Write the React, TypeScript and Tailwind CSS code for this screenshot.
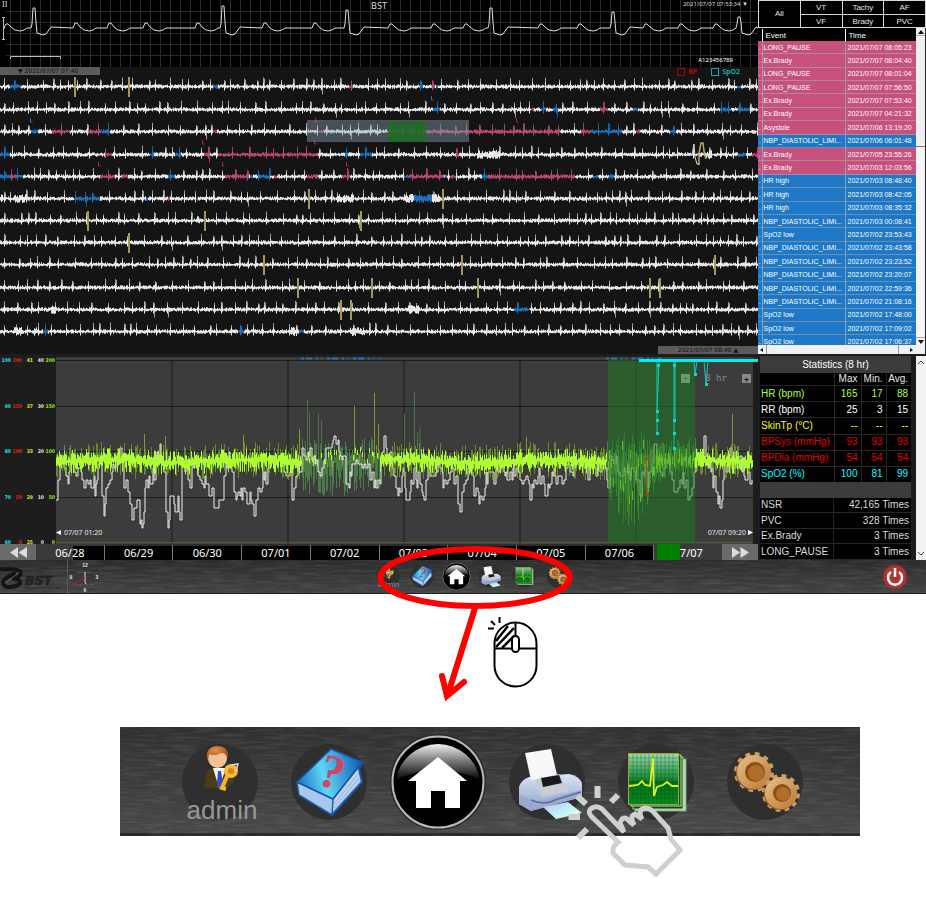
import React from "react";

const PINK = "#c2185b";
const BLUE = "#1e73be";

function makeRandom(seed: number) {
  let s = seed;
  return () => {
    s = (s * 1664525 + 1013904223) % 4294967296;
    return s / 4294967296;
  };
}

/* ---------- lead II strip ---------- */

const beats: [number, "p" | "q", number][] = [
  [7, "p", 24], [34, "q", 8], [76, "p", 23], [110, "p", 23], [146, "p", 23], [198, "p", 23],
  [223, "q", 6], [265, "p", 23], [315, "p", 23], [347, "q", 10], [391, "p", 24], [434, "p", 24],
  [466, "p", 24], [491, "q", 8], [541, "p", 24], [580, "p", 24], [613, "q", 12], [646, "p", 24],
  [681, "p", 24], [716, "p", 24], [739, "q", 17],
];

const leadPath =
  "M5 28 " +
  beats
    .map(([x, kind, top]) =>
      kind === "p"
        ? `L${x - 3} 28 L${x - 1} ${top} L${x + 1} ${top} L${x + 4} 27 L${x + 8} 30 L${x + 13} 31 L${x + 17} 30 L${x + 20} 28`
        : `L${x - 3} 28 L${x - 2} 24 L${x - 1} ${top} L${x + 1} ${top} L${x + 2} 22 L${x + 3} 33 L${x + 9} 35 L${x + 12} 34 L${x + 17} 27`
    )
    .join(" ") +
  " L758 28";

function LeadStrip() {
  return (
    <section className="relative h-[67px] bg-black">
      <svg className="block h-full w-full" viewBox="0 0 758 67" preserveAspectRatio="none">
        {Array.from({ length: 75 }, (_, i) => (
          <path key={i} d={`M${i * 10 + 10.5} 0V67`} stroke="#2b2b2b" />
        ))}
        {[11.5, 22.5, 33.5, 44.5, 55.5].map((y) => (
          <path key={y} d={`M6 ${y}H758`} stroke="#2b2b2b" />
        ))}
        <path d={leadPath} fill="none" stroke="#dedede" strokeLinejoin="round" />
        <path d="M3.5 17V40M2 17.5H5M2 39.5H5M10.5 59V56.5H60.5V59" fill="none" stroke="#bdbdbd" />
      </svg>
      <div className="absolute inset-x-0 top-0 grid grid-cols-3 px-[2px] text-[#dcdcdc]">
        <span className="font-['Liberation_Serif',serif] text-[8px] leading-[9px]">II</span>
        <span className="text-center font-['Noto_Sans',sans-serif] text-[9px] leading-[12px]">BST</span>
        <span className="pr-[8px] text-right font-['Noto_Sans',sans-serif] text-[6px] leading-[9px]">
          2021/07/07 07:53:34 ▼
        </span>
      </div>
      <span className="absolute right-[25px] bottom-[3px] font-['Noto_Sans',sans-serif] text-[6px] leading-[8px] text-white">
        A123456789
      </span>
    </section>
  );
}

/* ---------- twelve-row overview ---------- */

type Row = { y: number; blue?: number[][]; pink?: number[][]; pauses?: number[]; busy?: number[][] };

const rows: Row[] = [
  { y: 86, blue: [[10, 21], [213, 218], [420, 423], [436, 438], [737, 741]], pink: [[349, 353], [432, 435]], pauses: [74, 128] },
  { y: 109, blue: [[433, 440], [541, 546], [553, 558], [633, 638], [720, 731], [738, 750]], pink: [[531, 534], [600, 608]] },
  { y: 131, blue: [[31, 38], [100, 110], [591, 622], [670, 676]], pink: [[52, 70], [88, 100], [213, 217], [318, 324], [388, 560], [581, 591], [636, 640]] },
  { y: 154, blue: [[0, 10], [150, 154], [175, 181], [345, 348], [360, 372], [738, 746]], pink: [[105, 112], [204, 210], [218, 318], [456, 459], [752, 758]], busy: [[477, 500], [706, 712]] },
  { y: 176, blue: [[0, 10], [17, 23], [168, 175], [250, 253], [258, 270], [404, 408], [445, 447], [482, 488], [593, 598], [609, 614]], pink: [[10, 17], [100, 115], [122, 128], [225, 249], [274, 277], [307, 318], [342, 350], [408, 444], [450, 456], [488, 575]] },
  { y: 198, blue: [[74, 100], [146, 148], [414, 432]], pink: [[168, 170], [196, 198]], pauses: [308, 442], busy: [[0, 3], [14, 26], [338, 354], [404, 440]] },
  { y: 220, pauses: [87, 204, 360], busy: [[196, 200]] },
  { y: 242, pauses: [128] },
  { y: 264, pauses: [263, 461, 714] },
  { y: 287, pauses: [297, 371, 477, 649, 659] },
  { y: 309, blue: [[514, 530]], pauses: [340, 350], busy: [[51, 55], [408, 420]] },
  { y: 331, blue: [[43, 48], [238, 244], [299, 304]], busy: [[14, 22], [34, 37], [290, 298], [350, 365]] },
];

const inside = (list: number[][] | undefined, x: number) => !!list && list.some(([a, b]) => x >= a && x < b);

function traceRow(row: Row, index: number) {
  const rnd = makeRandom(index * 977 + 31);
  const out: Record<string, string> = { white: "", blue: "", pink: "", sWhite: "", sBlue: "", sPink: "" };
  let next = 4;
  for (let x = 0; x < 758; x++) {
    const key = inside(row.blue, x) ? "blue" : inside(row.pink, x) ? "pink" : "white";
    const k = inside(row.busy, x) ? 2 : 1;
    const c = row.y - 67 + 0.5;
    const up = (0.5 + rnd() * 1.8) * k;
    const down = (0.7 + rnd() * 1.6) * k;
    out[key] += `M${x + 0.5} ${(c - up).toFixed(1)}V${(c + down).toFixed(1)}`;
    if (x >= next) {
      const s = key === "blue" ? "sBlue" : key === "pink" ? "sPink" : "sWhite";
      const h = 6 + rnd() * 3;
      out[s] += `M${x + 0.5} ${(c - h).toFixed(1)}V${(c + 2).toFixed(1)}`;
      if (rnd() < 0.4) out[s] += `M${x + 1.5} ${(c - h + 1).toFixed(1)}V${(c + 2).toFixed(1)}`;
      out[key] += `M${x + 0.5} ${(c - 4).toFixed(1)}V${(c + 4).toFixed(1)}`;
      if (rnd() < 0.03) out[s] += `M${x + 1.5} ${c}V${c + 8}`;
      next = x + 6 + Math.floor(rnd() * 12);
    }
  }
  return out;
}

const traces = rows.map(traceRow);
const lMarks: [number, number, string][] = [
  [432, 98, BLUE], [31, 120, BLUE], [316, 120, PINK], [517, 120, PINK], [203, 142, PINK],
  [315, 142, PINK], [99, 164, PINK], [223, 164, PINK], [347, 164, PINK],
];

function Overview() {
  return (
    <section className="relative flex h-[287px] flex-col justify-between bg-[#141414] font-['DejaVu_Sans',sans-serif] text-[6px]">
      <svg className="absolute inset-0 h-full w-full" viewBox="0 0 758 287" preserveAspectRatio="none">
        {traces.map((t, i) => (
          <g key={i} fill="none">
            <path d={t.sWhite} stroke="#a0a0a0" />
            <path d={t.sBlue} stroke="#1a5f9c" />
            <path d={t.sPink} stroke="#9c4063" />
            <path d={t.white} stroke="#e8e8e8" />
            <path d={t.blue} stroke={BLUE} />
            <path d={t.pink} stroke="#b84a70" />
            {(rows[i].pauses || []).map((x) => (
              <path key={x} d={`M${x + 1} ${rows[i].y - 76}v20`} stroke="#a59a55" strokeWidth="2" />
            ))}
          </g>
        ))}
        <path d="M692 88L694 77L695 90L697 97H700" fill="none" stroke="#dedede" />
        <path d="M697 97H699V86L701 76H703L704 84L706 92" fill="none" stroke="#b5aa62" strokeWidth="1.5" />
        {lMarks.map(([x, y, color], i) => (
          <path key={i} d={`M${x - 0.5} ${y - 69}v4h2`} fill="none" stroke={color} />
        ))}
        <rect x="307.5" y="53.5" width="161" height="21" fill="#8ba5b8" fillOpacity="0.42" stroke="#6d5a70" strokeOpacity="0.7" />
        <rect x="388" y="54" width="38" height="21" fill="#1f6b25" fillOpacity="0.85" />
      </svg>
      <div className="relative flex items-start justify-between">
        <div className="h-[8px] w-[100px] bg-[#5b5b5b] pl-[18px] leading-[8px] text-[#101010]">▼ 2021/07/07 07:40</div>
        <div className="flex gap-[14px] pt-[1px] pr-[18px] font-['Noto_Sans',sans-serif] text-[7px] leading-[8px] font-bold">
          <label className="flex items-center gap-[3px] text-[#c00000]">
            <input type="checkbox" className="h-[8px] w-[8px] appearance-none border border-[#b00000]" />
            BP
          </label>
          <label className="flex items-center gap-[3px] text-[#16a8a8]">
            <input type="checkbox" className="h-[8px] w-[8px] appearance-none border border-[#16a8a8]" />
            SpO2
          </label>
        </div>
      </div>
      <div className="relative h-[8px] w-[100px] self-end bg-[#5b5b5b] text-center leading-[8px] text-[#101010]">
        2021/07/07 08:40 ▲
      </div>
    </section>
  );
}

/* ---------- trend chart ---------- */

const respiration: [number, number][] = [
  [56, 492], [60, 455], [65, 470], [72, 475], [78, 462], [83, 494], [88, 475], [95, 482], [100, 455], [103, 512],
  [108, 480], [115, 465], [121, 442], [123, 475], [128, 488], [132, 508], [137, 500], [142, 526], [145, 495], [148, 480],
  [155, 470], [160, 442], [163, 465], [167, 522], [172, 490], [175, 512], [178, 485], [180, 518], [183, 450], [190, 488],
  [195, 455], [200, 478], [207, 480], [210, 500], [213, 496], [216, 517], [222, 488], [228, 460], [233, 475], [235, 505],
  [240, 488], [245, 500], [250, 500], [256, 508], [260, 480], [268, 470], [273, 452], [280, 458], [290, 475], [293, 498],
  [300, 460], [307, 446], [314, 455], [322, 470], [330, 440], [336, 431], [342, 455], [348, 485], [355, 460], [366, 470],
  [378, 485], [384, 445], [390, 460], [395, 485], [399, 498], [403, 465], [407, 514], [413, 465], [418, 480], [423, 503],
  [428, 470], [435, 488], [440, 465], [447, 490], [452, 470], [460, 500], [468, 470], [473, 485], [481, 505], [487, 475],
  [493, 482], [500, 455], [507, 470], [515, 478], [525, 478], [532, 495], [540, 475], [546, 493], [552, 470], [560, 480],
  [570, 470], [580, 460], [590, 470], [600, 465], [608, 478], [612, 450], [620, 482], [628, 470], [640, 483], [645, 460],
  [648, 488], [655, 442], [660, 478], [668, 465], [675, 500], [680, 470], [690, 500], [697, 465], [705, 442], [709, 468],
  [715, 480], [720, 508], [725, 460], [732, 455], [740, 465], [748, 475], [752, 490],
];

function buildTrend() {
  const rnd = makeRandom(4242);
  let white = "";
  let i = 0;
  for (let x = 56; x < 753; x += 1) {
    while (i < respiration.length - 2 && respiration[i + 1][0] <= x) i++;
    const [x0, y0] = respiration[i];
    const [x1, y1] = respiration[i + 1];
    const t = Math.min(1, (x - x0) / (x1 - x0));
    const y = Math.round((y0 + (y1 - y0) * t + (rnd() - 0.45) * 22) / 4) * 4;
    if (x === 56) white = `M56 ${y}`;
    else if (x % 2 === 0 || rnd() < 0.3) white += `H${x}V${y}`;
  }
  let bright = "";
  let mid = "";
  let dark = "";
  for (let x = 56; x < 753; x += 1) {
    const c = 461 + Math.sin(x / 23) * 1.5;
    const a = rnd() < 0.15 ? 11 : 1 + rnd() * 7;
    const b = rnd() < 0.15 ? 12 : 1 + rnd() * 8;
    const quiet = x > 301 && x < 380;
    const alarm = x >= 606 && x <= 655;
    if (quiet) {
      dark += `M${x + 0.5} ${(c - rnd() * 24).toFixed(0)}V${(c + rnd() * 34).toFixed(0)}`;
      if (rnd() < 0.3) mid += `M${x + 0.5} ${(c - rnd() * 16).toFixed(0)}v${(4 + rnd() * 10).toFixed(0)}`;
      if (rnd() < 0.3) bright += `M${x + 0.5} ${(c - rnd() * 14).toFixed(0)}v5`;
    } else if (alarm) {
      const low = 30 + 36 * Math.sin(((x - 606) / 49) * Math.PI);
      dark += `M${x + 0.5} ${(c - rnd() * 30).toFixed(0)}V${(c + rnd() * low).toFixed(0)}`;
      if (rnd() < 0.5) mid += `M${x + 0.5} ${(c - rnd() * 22).toFixed(0)}V${(c + rnd() * low).toFixed(0)}`;
      if (rnd() < 0.5) bright += `M${x + 0.5} ${(c + (rnd() - 0.4) * low).toFixed(0)}v9`;
    } else {
      const sparse = x > 655 && x < 696;
      if (!sparse || rnd() < 0.7) bright += `M${x + 0.5} ${(c - a).toFixed(1)}V${(c + b).toFixed(1)}`;
      if (rnd() < 0.45) mid += `M${x + 0.5} ${(c - 5 - rnd() * 13).toFixed(0)}V${(c + 6 + rnd() * 13).toFixed(0)}`;
      if (sparse) dark += `M${x + 0.5} ${(c - rnd() * 22).toFixed(0)}V${(c + rnd() * 24).toFixed(0)}`;
    }
  }
  return { white, bright, mid, dark };
}

const trend = buildTrend();
const axisRows = [
  ["100", "200", "41", "40", "200"],
  ["90", "150", "37", "30", "150"],
  ["80", "100", "33", "20", "100"],
  ["70", "50", "29", "10", "50"],
  ["60", "0", "25", "0", "0"],
];
const axisColors = ["text-[#1fe0e0]", "text-[#e62222]", "text-[#e6e622]", "text-[#e0e0e0]", "text-[#9be622]"];
const markers = [[658, 365], [657, 411], [657, 420], [657, 433], [674, 365], [674, 420], [674, 433], [674, 448], [695, 374], [706, 384]];

function TrendChart() {
  return (
    <section className="flex h-[190px] bg-[#1d1d1d]">
      <div className="flex w-[56px] flex-col justify-between pt-[4px] font-['DejaVu_Sans_Condensed','DejaVu_Sans',sans-serif] text-[5px] leading-[4px] font-bold">
        {axisRows.map((r) => (
          <div key={r[0]} className="grid grid-cols-5 pr-[1px] text-right">
            {r.map((v, i) => (
              <span key={i} className={axisColors[i]}>{v}</span>
            ))}
          </div>
        ))}
      </div>
      <div className="relative min-w-0 flex-1">
        <svg className="block h-full w-full" viewBox="56 354 702 190" preserveAspectRatio="none">
          <rect x="56" y="357" width="697" height="186" fill="#3c3c3c" />
          <path d="M56 360.5H753M56 406.5H753M56 451.5H753M56 497.5H753M172 360V543M288 360V543M404 360V543M520 360V543M636 360V543" stroke="#1c1c1c" />
          <path d="M56 543H753" stroke="#6c6c4c" />
          <path d="M301 358.5H380M606 358.5H662" stroke={BLUE} strokeWidth="2" strokeDasharray="3 2 6 4 2 3 1 5" />
          <path d={trend.dark} stroke="#4c7a48" />
          <path d="M307.5 400V460M309.5 412V450M318.5 413V450M321.5 420V455M404.5 414V450M414.5 392V450M417.5 432V455M420 427V455" stroke="#4a7448" />
          <path d={trend.white} fill="none" stroke="#f0f0f0" strokeWidth="1" />
          <path d={trend.mid} stroke="#86bd2f" strokeOpacity="0.6" />
          <path d={trend.bright} stroke="#adff2f" />
          <path d="M374.5 393V450M354.5 406V455M378.5 424V460M144.5 434V455M165.5 436V455M243.5 435V455M299.5 429V455M526.5 437V455M732.5 414V455" stroke="#7d9a35" />
          <rect x="608" y="360" width="87" height="183" fill="#1d7a22" fillOpacity="0.52" />
          <path d="M639 360.5H758" stroke="#00f0f0" strokeWidth="3" />
          <path d="M657 362V433M659 362L657 411M674 362V448M675 362V420M694 361L695 374L697 361M704 361L706 384L708 361" fill="none" stroke="#12c9b4" />
          {markers.map(([x, y]) => (
            <rect key={`${x}-${y}`} x={x - 1} y={y - 1} width="3" height="3" fill="#10d8c4" />
          ))}
          <path d="M646.5 459V495" stroke="#b5431c" />
          <circle cx="646.5" cy="459" r="1.5" fill="#d42a10" />
          <circle cx="646.5" cy="494.500" r="1.5" fill="#d42a10" />
        </svg>
        <div className="absolute top-[20px] right-[7px] flex w-[70px] items-center justify-between font-['DejaVu_Sans_Mono',monospace] text-[9px] leading-[9px] text-[#8c8c8c]">
          <button type="button" aria-label="Shorter range" className="h-[9px] w-[9px] bg-[#6a9a6a] text-[8px] leading-[8px] text-[#1f3f1f]">-</button>
          <span>8 hr</span>
          <button type="button" aria-label="Longer range" className="h-[9px] w-[9px] bg-[#8a8a8a] text-[9px] leading-[8px] text-black">+</button>
        </div>
        <div className="absolute right-[5px] bottom-[7px] left-0 flex justify-between font-['Noto_Sans',sans-serif] text-[7px] leading-[9px] text-[#e6e6e6]">
          <span className="flex items-center gap-[3px]">
            <svg className="h-[5px] w-[5px]" viewBox="0 0 5 5"><path d="M5 0V5L0 2.500z" fill="#fff" /></svg>
            07/07 01:20
          </span>
          <span className="flex items-center gap-[2px]">
            07/07 09:20
            <svg className="h-[5px] w-[5px]" viewBox="0 0 5 5"><path d="M0 0V5L5 2.500z" fill="#fff" /></svg>
          </span>
        </div>
      </div>
    </section>
  );
}

const days = ["06/28", "06/29", "06/30", "07/01", "07/02", "07/03", "07/04", "07/05", "07/06", "07/07"];

function Timeline() {
  return (
    <nav className="relative flex h-[16px] bg-black font-['Noto_Sans',sans-serif] text-[11px] leading-[14px] text-white">
      <button type="button" aria-label="Earlier" className="flex w-[36px] items-center justify-center bg-[#6a6a6a]">
        <svg className="h-[11px] w-[17px]" viewBox="0 0 17 11"><path d="M8 0V11L0 5.500zM17 0V11L8.500 5.500z" fill="#dcdcdc" /></svg>
      </button>
      {days.map((d, i) => (
        <button
          type="button"
          key={d}
          className={
            i === 0
              ? "flex-1 border-t-2 border-[#3a3a3a] bg-[linear-gradient(90deg,#3a3a3a_54%,#000_54%)]"
              : i === 9
                ? "relative flex-1 border-t-2 border-l border-[#3a3a3a] border-l-[#777] bg-[#3a3a3a]"
                : "flex-1 border-t-2 border-l border-t-[#2c2c2c] border-l-[#777]"
          }
        >
          {d}
          {i === 9 && <span className="absolute -top-[2px] left-[3px] h-[16px] w-[23px] bg-[#008000]" />}
        </button>
      ))}
      <button type="button" aria-label="Later" className="flex w-[36px] items-center justify-center bg-[#6a6a6a]">
        <svg className="h-[11px] w-[17px]" viewBox="0 0 17 11"><path d="M0 0V11L8 5.500zM8.500 0V11L17 5.500z" fill="#dcdcdc" /></svg>
      </button>
    </nav>
  );
}

/* ---------- sidebar ---------- */

const filters = ["VT", "Tachy", "AF", "VF", "Brady", "PVC"];
const NBP = "NBP_DIASTOLIC_LIMI...";
const events: [string, string][] = [
  ["LONG_PAUSE", "2021/07/07 08:05:23"], ["Ex.Brady", "2021/07/07 08:04:40"], ["LONG_PAUSE", "2021/07/07 08:01:04"],
  ["LONG_PAUSE", "2021/07/07 07:56:50"], ["Ex.Brady", "2021/07/07 07:53:40"], ["Ex.Brady", "2021/07/07 04:21:32"],
  ["Asystole", "2021/07/06 13:19:20"], [NBP, "2021/07/06 06:01:48"], ["Ex.Brady", "2021/07/05 23:55:26"],
  ["Ex.Brady", "2021/07/03 12:03:56"], ["HR high", "2021/07/03 08:48:40"], ["HR high", "2021/07/03 08:42:05"],
  ["HR high", "2021/07/03 08:35:32"], [NBP, "2021/07/03 00:08:41"], ["SpO2 low", "2021/07/02 23:53:43"],
  [NBP, "2021/07/02 23:43:58"], [NBP, "2021/07/02 23:23:52"], [NBP, "2021/07/02 23:20:07"],
  [NBP, "2021/07/02 22:59:36"], [NBP, "2021/07/02 21:08:16"], ["SpO2 low", "2021/07/02 17:48:00"],
  ["SpO2 low", "2021/07/02 17:09:02"], ["SpO2 low", "2021/07/02 17:06:37"],
];
const isAlarm = (name: string) => name === "LONG_PAUSE" || name === "Ex.Brady" || name === "Asystole";

const stats: [string, string, string, string, string][] = [
  ["HR (bpm)", "165", "17", "88", "text-[#adff2f]"],
  ["RR (bpm)", "25", "3", "15", "text-white"],
  ["SkinTp (°C)", "--", "--", "--", "text-[#ffff00]"],
  ["BPSys (mmHg)", "93", "93", "93", "text-[#e60000]"],
  ["BPDia (mmHg)", "54", "54", "54", "text-[#e60000]"],
  ["SpO2 (%)", "100", "81", "99", "text-[#00ffff]"],
];
const counts: [string, string][] = [
  ["NSR", "42,165 Times"], ["PVC", "328 Times"], ["Ex.Brady", "3 Times"], ["LONG_PAUSE", "3 Times"],
];

function Arrow({ d }: { d: string }) {
  return <svg className="h-[4px] w-[6px]" viewBox="0 0 6 4"><path d={d} fill="#111" /></svg>;
}

function EventList() {
  return (
    <div className="flex h-[326px] flex-col border-r border-[#222] bg-black">
      <div className="flex min-h-0 flex-1">
        <div className="min-w-0 flex-1 overflow-hidden pt-[1px]">
          <table className="h-[320px] w-full table-fixed border-collapse font-['Liberation_Sans',sans-serif] text-[7px] leading-[9px] whitespace-nowrap text-white">
            <colgroup>
              <col className="w-[4px]" />
              <col />
              <col className="w-[71px]" />
            </colgroup>
            <thead>
              <tr className="h-[12px] text-left text-[8px]">
                <th />
                <th className="border-l border-white p-0 pl-[3px] font-normal">Event</th>
                <th className="border-l border-white p-0 pl-[3px] font-normal">Time</th>
              </tr>
            </thead>
            <tbody>
              {events.map(([name, time]) => (
                <tr key={time} className={isAlarm(name) ? "border-b border-[#b08a9a] bg-[#c8507c]" : "border-b border-[#6c8fb0] bg-[#1e78c8]"}>
                  <td className="p-0 text-center">.</td>
                  <td className="border-l border-[#8fa0b0] p-0 pl-[1px]">{name}</td>
                  <td className="border-l border-[#8fa0b0] p-0 pl-[2px]">{time}</td>
                </tr>
              ))}
            </tbody>
          </table>
        </div>
        <div className="flex w-[9px] flex-col justify-between bg-[#f4f4f4]">
          <div className="flex h-[119px] flex-col border-b border-[#777] bg-[#f0f0f0]">
            <button type="button" aria-label="Scroll up" className="flex h-[8px] items-center justify-center border-b border-[#aaa]"><Arrow d="M3 0L6 4H0z" /></button>
          </div>
          <button type="button" aria-label="Scroll down" className="flex h-[8px] items-center justify-center border-t border-[#aaa]"><Arrow d="M0 0H6L3 4z" /></button>
        </div>
      </div>
      <div className="flex h-[9px] items-center justify-between bg-[#f0f0f0]">
        <button type="button" aria-label="Scroll left" className="flex h-full w-[9px] items-center justify-center border-r border-[#999]"><Arrow d="M4 0V4L1 2z" /></button>
        <button type="button" aria-label="Scroll right" className="mr-[9px] flex h-full w-[18px] items-center justify-end border-l border-[#999] pr-[2px]"><Arrow d="M2 0V4L5 2z" /></button>
      </div>
    </div>
  );
}

function Statistics() {
  return (
    <div className="flex h-[206px] bg-[#1c1c1c] pt-[2px]">
      <div className="min-w-0 flex-1 pr-[5px] pl-[2px] font-['Liberation_Sans',sans-serif] text-[10px] leading-[12px] whitespace-nowrap">
        <div className="h-[17px] bg-[#3c3c3c] text-center leading-[17px] text-white">Statistics (8 hr)</div>
        <table className="h-[109px] w-full table-fixed border-collapse bg-black text-right text-[#e6e6e6]">
          <colgroup>
            <col />
            <col className="w-[27px]" />
            <col className="w-[25px]" />
            <col className="w-[25px]" />
          </colgroup>
          <thead>
            <tr>
              <th />
              <th className="border-l border-[#262626] p-0 pr-[3px] text-right font-normal">Max</th>
              <th className="border-l border-[#262626] p-0 pr-[3px] text-right font-normal">Min.</th>
              <th className="border-l border-[#262626] p-0 pr-[3px] text-right font-normal">Avg.</th>
            </tr>
          </thead>
          <tbody>
            {stats.map(([name, max, min, avg, color]) => (
              <tr key={name} className={`border-t border-[#262626] ${color}`}>
                <th className="p-0 pl-[1px] text-left font-normal">{name}</th>
                <td className="border-l border-[#262626] p-0 pr-[3px]">{max}</td>
                <td className="border-l border-[#262626] p-0 pr-[3px]">{min}</td>
                <td className="border-l border-[#262626] p-0 pr-[3px]">{avg}</td>
              </tr>
            ))}
          </tbody>
        </table>
        <div className="h-[16px] bg-[#3c3c3c]" />
        <table className="h-[62px] w-full table-fixed border-collapse bg-black text-[#dadada]">
          <colgroup>
            <col />
            <col className="w-[78px]" />
          </colgroup>
          <tbody>
            {counts.map(([name, value]) => (
              <tr key={name} className="border-b border-[#262626]">
                <th className="p-0 pl-[1px] text-left font-normal">{name}</th>
                <td className="border-l border-[#262626] p-0 pr-[2px] text-right">{value}</td>
              </tr>
            ))}
          </tbody>
        </table>
      </div>
      <div className="flex w-[10px] flex-col items-center justify-between bg-[#f2f2f2] py-[4px]">
        <svg className="h-[4px] w-[6px]" viewBox="0 0 6 4"><path d="M0 4L3 1L6 4" fill="none" stroke="#444" /></svg>
        <svg className="h-[4px] w-[6px]" viewBox="0 0 6 4"><path d="M0 0L3 3L6 0" fill="none" stroke="#444" /></svg>
      </div>
    </div>
  );
}

function Sidebar() {
  return (
    <aside className="flex w-[168px] flex-col bg-black">
      <div className="grid h-[28px] grid-cols-4 grid-rows-2 gap-px border border-[#d8d8d8] bg-[#d8d8d8] font-['Liberation_Sans',sans-serif] text-[8px] text-[#e4e4e4]">
        <button type="button" className="row-span-2 bg-black">All</button>
        {filters.map((f) => (
          <button type="button" key={f} className="overflow-hidden bg-black pt-[2px] leading-[10px]">{f}</button>
        ))}
      </div>
      <EventList />
      <Statistics />
    </aside>
  );
}

/* ---------- toolbar ---------- */

function SharedDefs() {
  return (
    <svg className="absolute h-0 w-0" aria-hidden="true">
      <defs>
        <filter id="grain" x="0" y="0" width="100%" height="100%">
          <feTurbulence type="fractalNoise" baseFrequency="0.04 0.4" numOctaves="3" seed="4" />
          <feColorMatrix values="0 0 0 0 1  0 0 0 0 1  0 0 0 0 1  0.9 0 0 0 -0.35" />
        </filter>
        <linearGradient id="bookTop" x1="0" y1="0.6" x2="1" y2="0.4">
          <stop offset="0" stopColor="#1c74c4" /><stop offset="0.4" stopColor="#5fd6f6" /><stop offset="1" stopColor="#1560b4" />
        </linearGradient>
        <linearGradient id="gloss" x1="0" y1="0" x2="0" y2="1">
          <stop offset="0" stopColor="#f0f0f0" /><stop offset="0.4" stopColor="#8a8a8a" /><stop offset="1" stopColor="#000" />
        </linearGradient>
        <linearGradient id="printerBody" x1="0" y1="0" x2="0" y2="1">
          <stop offset="0" stopColor="#dbe5f4" /><stop offset="1" stopColor="#8b9fc6" />
        </linearGradient>
        <linearGradient id="sheet" x1="0" y1="0" x2="1" y2="1">
          <stop offset="0" stopColor="#c9b8f0" /><stop offset="0.5" stopColor="#bdf0f4" /><stop offset="1" stopColor="#f4fffb" />
        </linearGradient>
        <linearGradient id="monitor" x1="0" y1="0" x2="0" y2="1">
          <stop offset="0" stopColor="#9adcae" /><stop offset="0.5" stopColor="#1f8a3a" /><stop offset="0.55" stopColor="#067018" /><stop offset="1" stopColor="#0a8a20" />
        </linearGradient>
        <linearGradient id="brass" x1="0" y1="0" x2="1" y2="1">
          <stop offset="0" stopColor="#e8c08a" /><stop offset="1" stopColor="#b87838" />
        </linearGradient>
        <radialGradient id="hair" cx="0.4" cy="0.3" r="0.8">
          <stop offset="0" stopColor="#e0934a" /><stop offset="1" stopColor="#8a4312" />
        </radialGradient>
      </defs>
    </svg>
  );
}

const disc = <circle cx="40" cy="40" r="38" fill="#2f2f2f" />;

function AdminIcon() {
  return (
    <svg className="w-5/6" viewBox="0 0 80 80">
      {disc}
      <path d="M24 45L26 32Q28 27 34 26L46 26Q53 28 53 34L54 40L44 48Z" fill="#4d3a17" />
      <path d="M33 26L39 46L46 26Z" fill="#f2f4fa" />
      <path d="M38 29L41 29L43 42L40 46L37 42Z" fill="#2a50b8" />
      <ellipse cx="37.500" cy="16" rx="9.500" ry="10" fill="#f3c193" />
      <path d="M27 18Q25 5 37 4Q49 4 48 16Q46 11 41 11Q34 15 29 12Q29 16 27 18Z" fill="url(#hair)" />
      <path d="M48 32L42 46L46 47" fill="none" stroke="#f4b62c" strokeWidth="4" />
      <circle cx="51" cy="29" r="5" fill="#d08a18" stroke="#f4b83a" strokeWidth="4" />
      <path d="M51 23L58 22L56 29" fill="none" stroke="#cfd4da" strokeWidth="1.5" />
      <text x="42" y="77" textAnchor="middle" fontSize="26" fill="#989898" fontFamily="Liberation Sans, sans-serif">admin</text>
    </svg>
  );
}

function BookIcon() {
  return (
    <svg className="w-5/6" viewBox="0 0 80 80">
      {disc}
      <path d="M44 58L72 23L70 29L73 40L43 73Z" fill="#bcd4f2" />
      <path d="M45 62L71 30M45 66L71 35M44 70L72 39" stroke="#8fb0dc" />
      <path d="M8 40L44 57L43 73L10 53Z" fill="#a9c8ee" stroke="#1d62b0" strokeWidth="1.5" />
      <path d="M42 7L73 20L44 57L8 40Z" fill="url(#bookTop)" stroke="#1557a8" strokeWidth="1.5" />
      <path d="M73 20L70 27L73 40L43 73" fill="none" stroke="#1557a8" strokeWidth="2" />
      <text x="43" y="46" textAnchor="middle" transform="rotate(18 43 30)" fontSize="48" fontWeight="bold" fill="#cf4660" fontFamily="Liberation Serif, serif">?</text>
    </svg>
  );
}

function HomeIcon() {
  return (
    <svg className="w-full" viewBox="0 0 96 96">
      <circle cx="48" cy="48" r="47" fill="#000" stroke="#2b2b2b" strokeWidth="2" />
      <circle cx="48" cy="48" r="45.500" fill="#000" stroke="#b9b9b9" strokeWidth="2" />
      <path d="M6 46A42.500 42.500 0 0 1 90 46Q70 36 48 36T6 46Z" fill="url(#gloss)" />
      <path d="M48 23L77 47H70V74H55V57H41V74H26V47H18Z" fill="#fff" />
    </svg>
  );
}

function PrinterIcon() {
  return (
    <svg className="w-5/6" viewBox="0 0 80 80">
      {disc}
      <path d="M12 45Q14 38 22 35L62 32Q72 34 75 41V55L24 69L12 62Z" fill="url(#printerBody)" />
      <path d="M13 53L30 60L74 48V55L24 69L12 62Z" fill="#9aaace" />
      <path d="M18 11L44 7L50 33L24 38Z" fill="#f6f7f9" />
      <path d="M28 38L52 32L62 49L35 55Z" fill="#c9ccd2" />
      <path d="M34 36L52 33L55 41L36 45Z" fill="#17191d" />
      <path d="M24 58Q38 64 48 58L74 50" fill="none" stroke="#5d6f98" strokeWidth="1.5" />
      <path d="M36 65L61 60L75 71L49 77Z" fill="url(#sheet)" />
    </svg>
  );
}

function MonitorIcon() {
  return (
    <svg className="w-5/6" viewBox="0 0 80 80">
      {disc}
      <rect x="19" y="17" width="51" height="52" fill="#b9d8b4" stroke="#7fa87c" />
      <rect x="17" y="15" width="50" height="52" fill="#0d4a18" stroke="#a8cfa2" />
      <rect x="15" y="13" width="50" height="51" fill="#0d5a1c" stroke="#c2dcae" />
      <rect x="12.500" y="11.500" width="50" height="51" fill="url(#monitor)" stroke="#a3a52e" />
      {Array.from({ length: 11 }, (_, i) => (
        <path key={i} d={`M${17 + i * 4} 12v50M13 ${16 + i * 4}h49`} stroke="#045014" strokeOpacity="0.45" strokeWidth="0.7" />
      ))}
      <path d="M13 44L22 43L26 39L29 43L34 44L37 16L38 54L41 45L47 43L51 40L56 44H62" fill="none" stroke="#d6f02a" strokeWidth="1.8" />
    </svg>
  );
}

function Gear({ cx, cy, r }: { cx: number; cy: number; r: number }) {
  return (
    <g>
      {Array.from({ length: 12 }, (_, i) => (
        <rect key={i} x={cx - 2.5} y={cy - r} width="5" height="8" rx="1" fill="#cf9c60" transform={`rotate(${i * 30 + 10} ${cx} ${cy})`} />
      ))}
      <circle cx={cx - 1} cy={cy + 1} r={r - 3} fill="#9a6228" />
      <circle cx={cx} cy={cy} r={r - 3} fill="url(#brass)" />
      <circle cx={cx + 1} cy={cy} r={r - 10} fill="#8a4f16" />
      <circle cx={cx + 2} cy={cy + 1} r={r - 12} fill="#b06e28" />
    </g>
  );
}

function GearsIcon() {
  return (
    <svg className="w-5/6" viewBox="0 0 80 80">
      {disc}
      <Gear cx={29} cy={30} r={20} />
      <Gear cx={56} cy={51} r={19} />
    </svg>
  );
}

const tools = [
  { name: "admin", Icon: AdminIcon },
  { name: "Help", Icon: BookIcon },
  { name: "Home", Icon: HomeIcon },
  { name: "Print", Icon: PrinterIcon },
  { name: "Monitor", Icon: MonitorIcon },
  { name: "Settings", Icon: GearsIcon },
];

function ToolButtons({ large }: { large?: boolean }) {
  return (
    <div className={large ? "flex items-center gap-[13px]" : "flex items-center gap-[5px]"}>
      {tools.map(({ name, Icon }) => (
        <button
          type="button"
          key={name}
          aria-label={name}
          className={large ? "flex h-[96px] w-[96px] items-center justify-center" : "flex h-[29px] w-[29px] items-center justify-center"}
        >
          <Icon />
        </button>
      ))}
    </div>
  );
}

function Grain() {
  return (
    <svg className="absolute inset-0 h-full w-full" aria-hidden="true">
      <rect width="100%" height="100%" filter="url(#grain)" opacity="0.22" />
    </svg>
  );
}

function Logo() {
  return (
    <svg className="h-[34px] w-[68px] border-r border-[#5a5a5a]" viewBox="0 0 68 34">
      <path d="M0 9H13Q22 10 21 14Q19 18 12 18Q22 19 20 24Q15 28 7 27Q1 25 4 20Q8 16 16 13" fill="none" stroke="#141414" strokeWidth="4" />
      <path d="M5 23L19 13" stroke="#6a6a6a" />
      <text x="25" y="25" fontSize="13" fontStyle="italic" fontWeight="bold" fill="#262626" stroke="#191919" strokeWidth="0.5" fontFamily="DejaVu Sans, sans-serif">BST</text>
      <path d="M24 28H61" stroke="#222" strokeDasharray="2 1" />
    </svg>
  );
}

function Clock() {
  return (
    <svg className="h-[34px] w-[32px]" viewBox="0 0 32 34" fontFamily="Liberation Sans, sans-serif" fontWeight="bold" fill="#e2e2e2">
      <text x="17" y="7" fontSize="5" textAnchor="middle">12</text>
      <text x="29" y="19" fontSize="5" textAnchor="middle">3</text>
      <text x="17" y="32" fontSize="5" textAnchor="middle">6</text>
      <text x="3" y="19" fontSize="5" textAnchor="middle">9</text>
      <path d="M10 12.500H23M6 24.500H26" stroke="#5c5c5c" strokeDasharray="2 1" />
      <path d="M17 12V22L18 24" fill="none" stroke="#ddd" />
      <path d="M17 18L6 24" stroke="#c01818" />
    </svg>
  );
}

function ClickCallout() {
  return (
    <svg className="pointer-events-none absolute -top-[16px] left-0 h-[160px] w-[200px]" viewBox="374 546 200 160" fill="none">
      <ellipse cx="475" cy="577.500" rx="94.500" ry="28.500" stroke="#ff0000" strokeWidth="6" />
      <path d="M475 608L448 694" stroke="#ff0000" strokeWidth="6" />
      <path d="M442 676L447 696L464 682" stroke="#ff0000" strokeWidth="6" strokeLinecap="round" strokeMiterlimit="10" />
      <g stroke="#000" strokeWidth="2">
        <path d="M496 641L508 626M496 647L514 628M502 648L514 636" strokeWidth="2.500" />
        <rect x="494.500" y="622.500" width="42" height="64" rx="21" />
        <path d="M494 648.500H537M515.500 622V636" />
        <rect x="512" y="636" width="7" height="16" rx="3.500" fill="#fff" />
        <path d="M488 628.500H494M491 621L495 625M499.500 617V623" />
      </g>
    </svg>
  );
}

function HandPointer() {
  return (
    <svg className="pointer-events-none absolute top-[58px] left-[446px] h-[94px] w-[120px]" viewBox="566 785 120 94" fill="none" stroke="#cfcfcf">
      <path
        d="M618 842L591 816Q587 811 592 808Q597 805 602 809L624 832L620 823Q622 816 627 819L634 825Q629 816 635 814L642 819Q637 810 645 808Q651 808 656 815L668 828L671 839L680 850L656 874L648 867L625 865L613 853Q612 846 618 842Z"
        strokeWidth="5"
      />
      <path d="M597.500 786V798M611 802L618 795M577 796L586 804M568.500 817H580M578 838L587 829" strokeWidth="6" />
    </svg>
  );
}

export default function App() {
  return (
    <main className="min-h-screen overflow-x-hidden bg-white">
      <SharedDefs />
      <div className="flex">
        <div className="min-w-0 flex-1">
          <LeadStrip />
          <Overview />
          <TrendChart />
          <Timeline />
        </div>
        <Sidebar />
      </div>
      <header className="relative flex h-[34px] items-center justify-between border-b border-[#222] bg-linear-to-b from-[#2c2c2c] to-[#424242]">
        <Grain />
        <div className="relative flex w-[110px]">
          <Logo />
          <Clock />
        </div>
        <div className="relative">
          <ToolButtons />
          <ClickCallout />
        </div>
        <div className="relative flex w-[90px] justify-end pr-[18px]">
          <button type="button" aria-label="Power" className="h-[26px] w-[26px]">
            <svg viewBox="0 0 26 26" fill="none">
              <circle cx="13" cy="13" r="12" fill="#b03434" stroke="#8a2828" />
              <path d="M9 8A7 7 0 1 0 17 8M13 4V13" stroke="#fff" strokeWidth="2.500" />
            </svg>
          </button>
        </div>
      </header>
      <section className="relative mt-[133px] mr-[66px] ml-[120px] flex h-[109px] items-center justify-center bg-linear-to-b from-[#303030] to-[#484848] pl-[4px] shadow-[inset_0_-3px_0_#292929]">
        <Grain />
        <div className="relative">
          <ToolButtons large />
        </div>
        <HandPointer />
      </section>
    </main>
  );
}
